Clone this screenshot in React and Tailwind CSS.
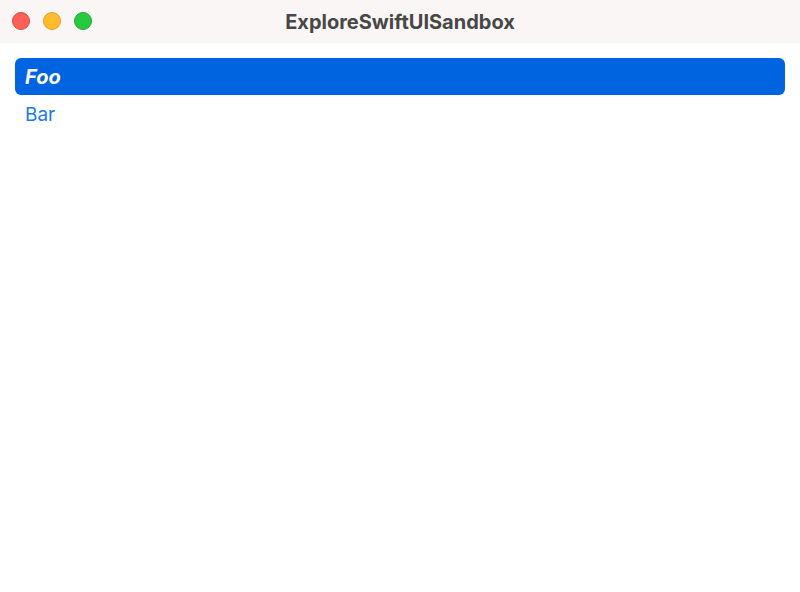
export default function App() {
  return (
    <div className="w-[800px] h-[592px] bg-white flex flex-col font-['Inter','Liberation_Sans',sans-serif]">
      <header className="relative h-[43px] bg-[#f9f6f5] flex items-center justify-center shrink-0">
        <div className="absolute left-[12px] top-[12px] flex gap-[13px]">
          <span className="w-[18px] h-[18px] rounded-full bg-[#fe5f57] border border-[#e2463f]" />
          <span className="w-[18px] h-[18px] rounded-full bg-[#febc2e] border border-[#e0a122]" />
          <span className="w-[18px] h-[18px] rounded-full bg-[#28c840] border border-[#1eab33]" />
        </div>
        <h1 className="text-[20px] font-bold text-[#474747] pt-[1px]">ExploreSwiftUISandbox</h1>
      </header>
      <ul className="px-[15px] pt-[15px] flex flex-col">
        <li className="h-[37px] rounded-[6px] bg-[#0064e1] flex items-center px-[10px] pt-[1px]">
          <span className="text-[20px] font-bold italic text-white leading-none">Foo</span>
        </li>
        <li className="h-[37px] flex items-center px-[10px] pt-[2px]">
          <span className="text-[19px] text-[#1a7ae8] leading-none">Bar</span>
        </li>
      </ul>
    </div>
  );
}
